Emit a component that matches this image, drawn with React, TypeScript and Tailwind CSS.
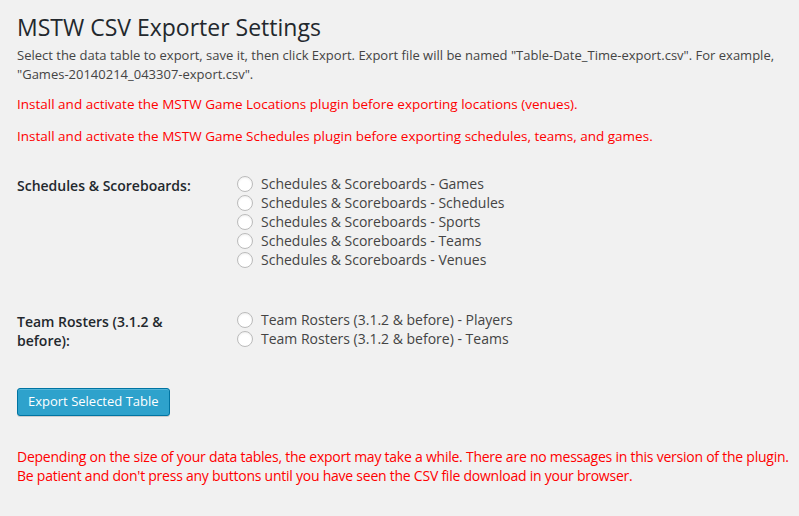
import React from "react";

const scheduleTables = [
  "Schedules & Scoreboards - Games",
  "Schedules & Scoreboards - Schedules",
  "Schedules & Scoreboards - Sports",
  "Schedules & Scoreboards - Teams",
  "Schedules & Scoreboards - Venues",
];

const rosterTables = [
  "Team Rosters (3.1.2 & before) - Players",
  "Team Rosters (3.1.2 & before) - Teams",
];

function RadioList({ items }: { items: string[] }) {
  return (
    <div className="flex flex-col">
      {items.map((item) => (
        <label key={item} className="flex items-center h-[19px] text-[14px] text-[#444]">
          <span className="w-4 h-4 rounded-full border border-[#bbb] bg-white shadow-[inset_0_1px_2px_rgba(0,0,0,0.07)] mr-2 shrink-0" />
          {item}
        </label>
      ))}
    </div>
  );
}

export default function App() {
  return (
    <div
      className="min-h-screen bg-[#f1f1f1] pl-[17px] pr-[17px] pt-[13px]"
      style={{ fontFamily: '"Open Sans", sans-serif' }}
    >
      {/* Header */}
      <h1 className="text-[23px] leading-[29px] text-[#23282d] font-normal">
        MSTW CSV Exporter Settings
      </h1>
      <p className="mt-[4px] text-[13px] leading-[19px] text-[#444]">
        Select the data table to export, save it, then click Export. Export file will be named
        "Table-Date_Time-export.csv". For example, "Games-20140214_043307-export.csv".
      </p>

      {/* Plugin warnings */}
      <p className="mt-[11px] text-[13.5px] leading-[19px] text-[#ff0000]">
        Install and activate the MSTW Game Locations plugin before exporting locations (venues).
      </p>
      <p className="mt-[13px] text-[13.5px] leading-[19px] text-[#ff0000]">
        Install and activate the MSTW Game Schedules plugin before exporting schedules, teams, and games.
      </p>

      {/* Table choices */}
      <div className="mt-[28px] flex">
        <div className="w-[220px] pt-[2px] text-[14px] leading-[19px] font-semibold text-[#23282d]">
          Schedules &amp; Scoreboards:
        </div>
        <RadioList items={scheduleTables} />
      </div>
      <div className="mt-[41px] flex">
        <div className="w-[220px] pr-[40px] pt-[2px] text-[14px] leading-[19px] font-semibold text-[#23282d]">
          Team Rosters (3.1.2 &amp; before):
        </div>
        <RadioList items={rosterTables} />
      </div>

      {/* Export Button */}
      <button className="mt-[38px] h-[28px] px-[10px] rounded-[3px] bg-[#2ea2cc] border border-[#0074a2] text-white text-[13px] shadow-[inset_0_1px_0_rgba(120,200,230,0.5),0_1px_0_rgba(0,0,0,0.15)]">
        Export Selected Table
      </button>

      {/* Footer note */}
      <p className="mt-[31px] text-[14px] leading-[19px] text-[#ff0000] tracking-[-0.24px] whitespace-nowrap">
        Depending on the size of your data tables, the export may take a while. There are no messages in this version of the plugin.
        <br />
        Be patient and don't press any buttons until you have seen the CSV file download in your browser.
      </p>
    </div>
  );
}
